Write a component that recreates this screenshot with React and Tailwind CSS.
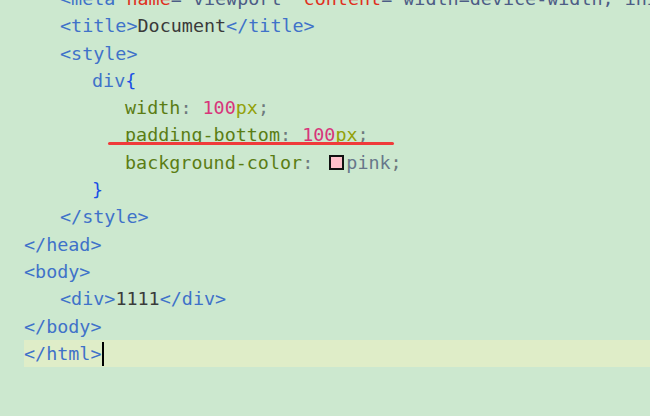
import React from 'react';

const C = {
  tag: 'text-[#3f72c9]',
  attr: 'text-[#e0301e]',
  str: 'text-[#4d5d86]',
  text: 'text-[#3a3a3a]',
  prop: 'text-[#5b7d14]',
  num: 'text-[#d8357a]',
  unit: 'text-[#93a10a]',
  punc: 'text-[#6e7a7e]',
  brace: 'text-[#1a4fe6]',
  val: 'text-[#67778a]',
};

function Line({ indent = 0, active = false, children }) {
  return (
    <div
      className={`h-[27.3px] leading-[27.3px] whitespace-pre ${active ? 'bg-[#dfedc8]' : ''}`}
      style={{ paddingLeft: indent }}
    >
      {children}
    </div>
  );
}

export default function App() {
  return (
    <div
      className="relative w-[650px] h-[416px] overflow-hidden bg-[#cce8cf] text-[18.4px]"
      style={{ fontFamily: '"DejaVu Sans Mono", monospace' }}
    >
      <div className="ml-[24px] -mt-[15px]">
        <Line indent={36}>
          <span className={C.tag}>&lt;meta </span>
          <span className={C.attr}>name</span>
          <span className={C.str}>="viewport" </span>
          <span className={C.attr}>content</span>
          <span className={C.str}>="width=device-width, initial-scale=1.0"</span>
          <span className={C.tag}>&gt;</span>
        </Line>
        <Line indent={36}>
          <span className={C.tag}>&lt;title&gt;</span>
          <span className={C.text}>Document</span>
          <span className={C.tag}>&lt;/title&gt;</span>
        </Line>
        <Line indent={36}>
          <span className={C.tag}>&lt;style&gt;</span>
        </Line>
        <Line indent={68}>
          <span className={C.tag}>div</span>
          <span className={C.brace}>{'{'}</span>
        </Line>
        <Line indent={101}>
          <span className={C.prop}>width</span>
          <span className={C.punc}>: </span>
          <span className={C.num}>100</span>
          <span className={C.unit}>px</span>
          <span className={C.punc}>;</span>
        </Line>
        <Line indent={101}>
          <span className={C.prop}>padding-bottom</span>
          <span className={C.punc}>: </span>
          <span className={C.num}>100</span>
          <span className={C.unit}>px</span>
          <span className={C.punc}>;</span>
        </Line>
        <Line indent={101}>
          <span className={C.prop}>background-color</span>
          <span className={C.punc}>: </span>
          <span className="inline-block w-[15px] h-[15px] ml-[5px] mr-[2px] align-[-1px] border-2 border-[#111] bg-[#ffc0cb]"></span>
          <span className={C.val}>pink</span>
          <span className={C.punc}>;</span>
        </Line>
        <Line indent={68}>
          <span className={C.brace}>{'}'}</span>
        </Line>
        <Line indent={36}>
          <span className={C.tag}>&lt;/style&gt;</span>
        </Line>
        <Line>
          <span className={C.tag}>&lt;/head&gt;</span>
        </Line>
        <Line>
          <span className={C.tag}>&lt;body&gt;</span>
        </Line>
        <Line indent={36}>
          <span className={C.tag}>&lt;div&gt;</span>
          <span className={C.text}>1111</span>
          <span className={C.tag}>&lt;/div&gt;</span>
        </Line>
        <Line>
          <span className={C.tag}>&lt;/body&gt;</span>
        </Line>
        <Line active>
          <span className={C.tag}>&lt;/html&gt;</span>
          <span className="inline-block w-[2px] h-[24px] bg-black align-middle -mt-[2px]"></span>
        </Line>
      </div>
      <div className="absolute left-[108px] top-[142px] w-[286px] h-[3px] bg-[#f03a3a] rounded-full"></div>
    </div>
  );
}
